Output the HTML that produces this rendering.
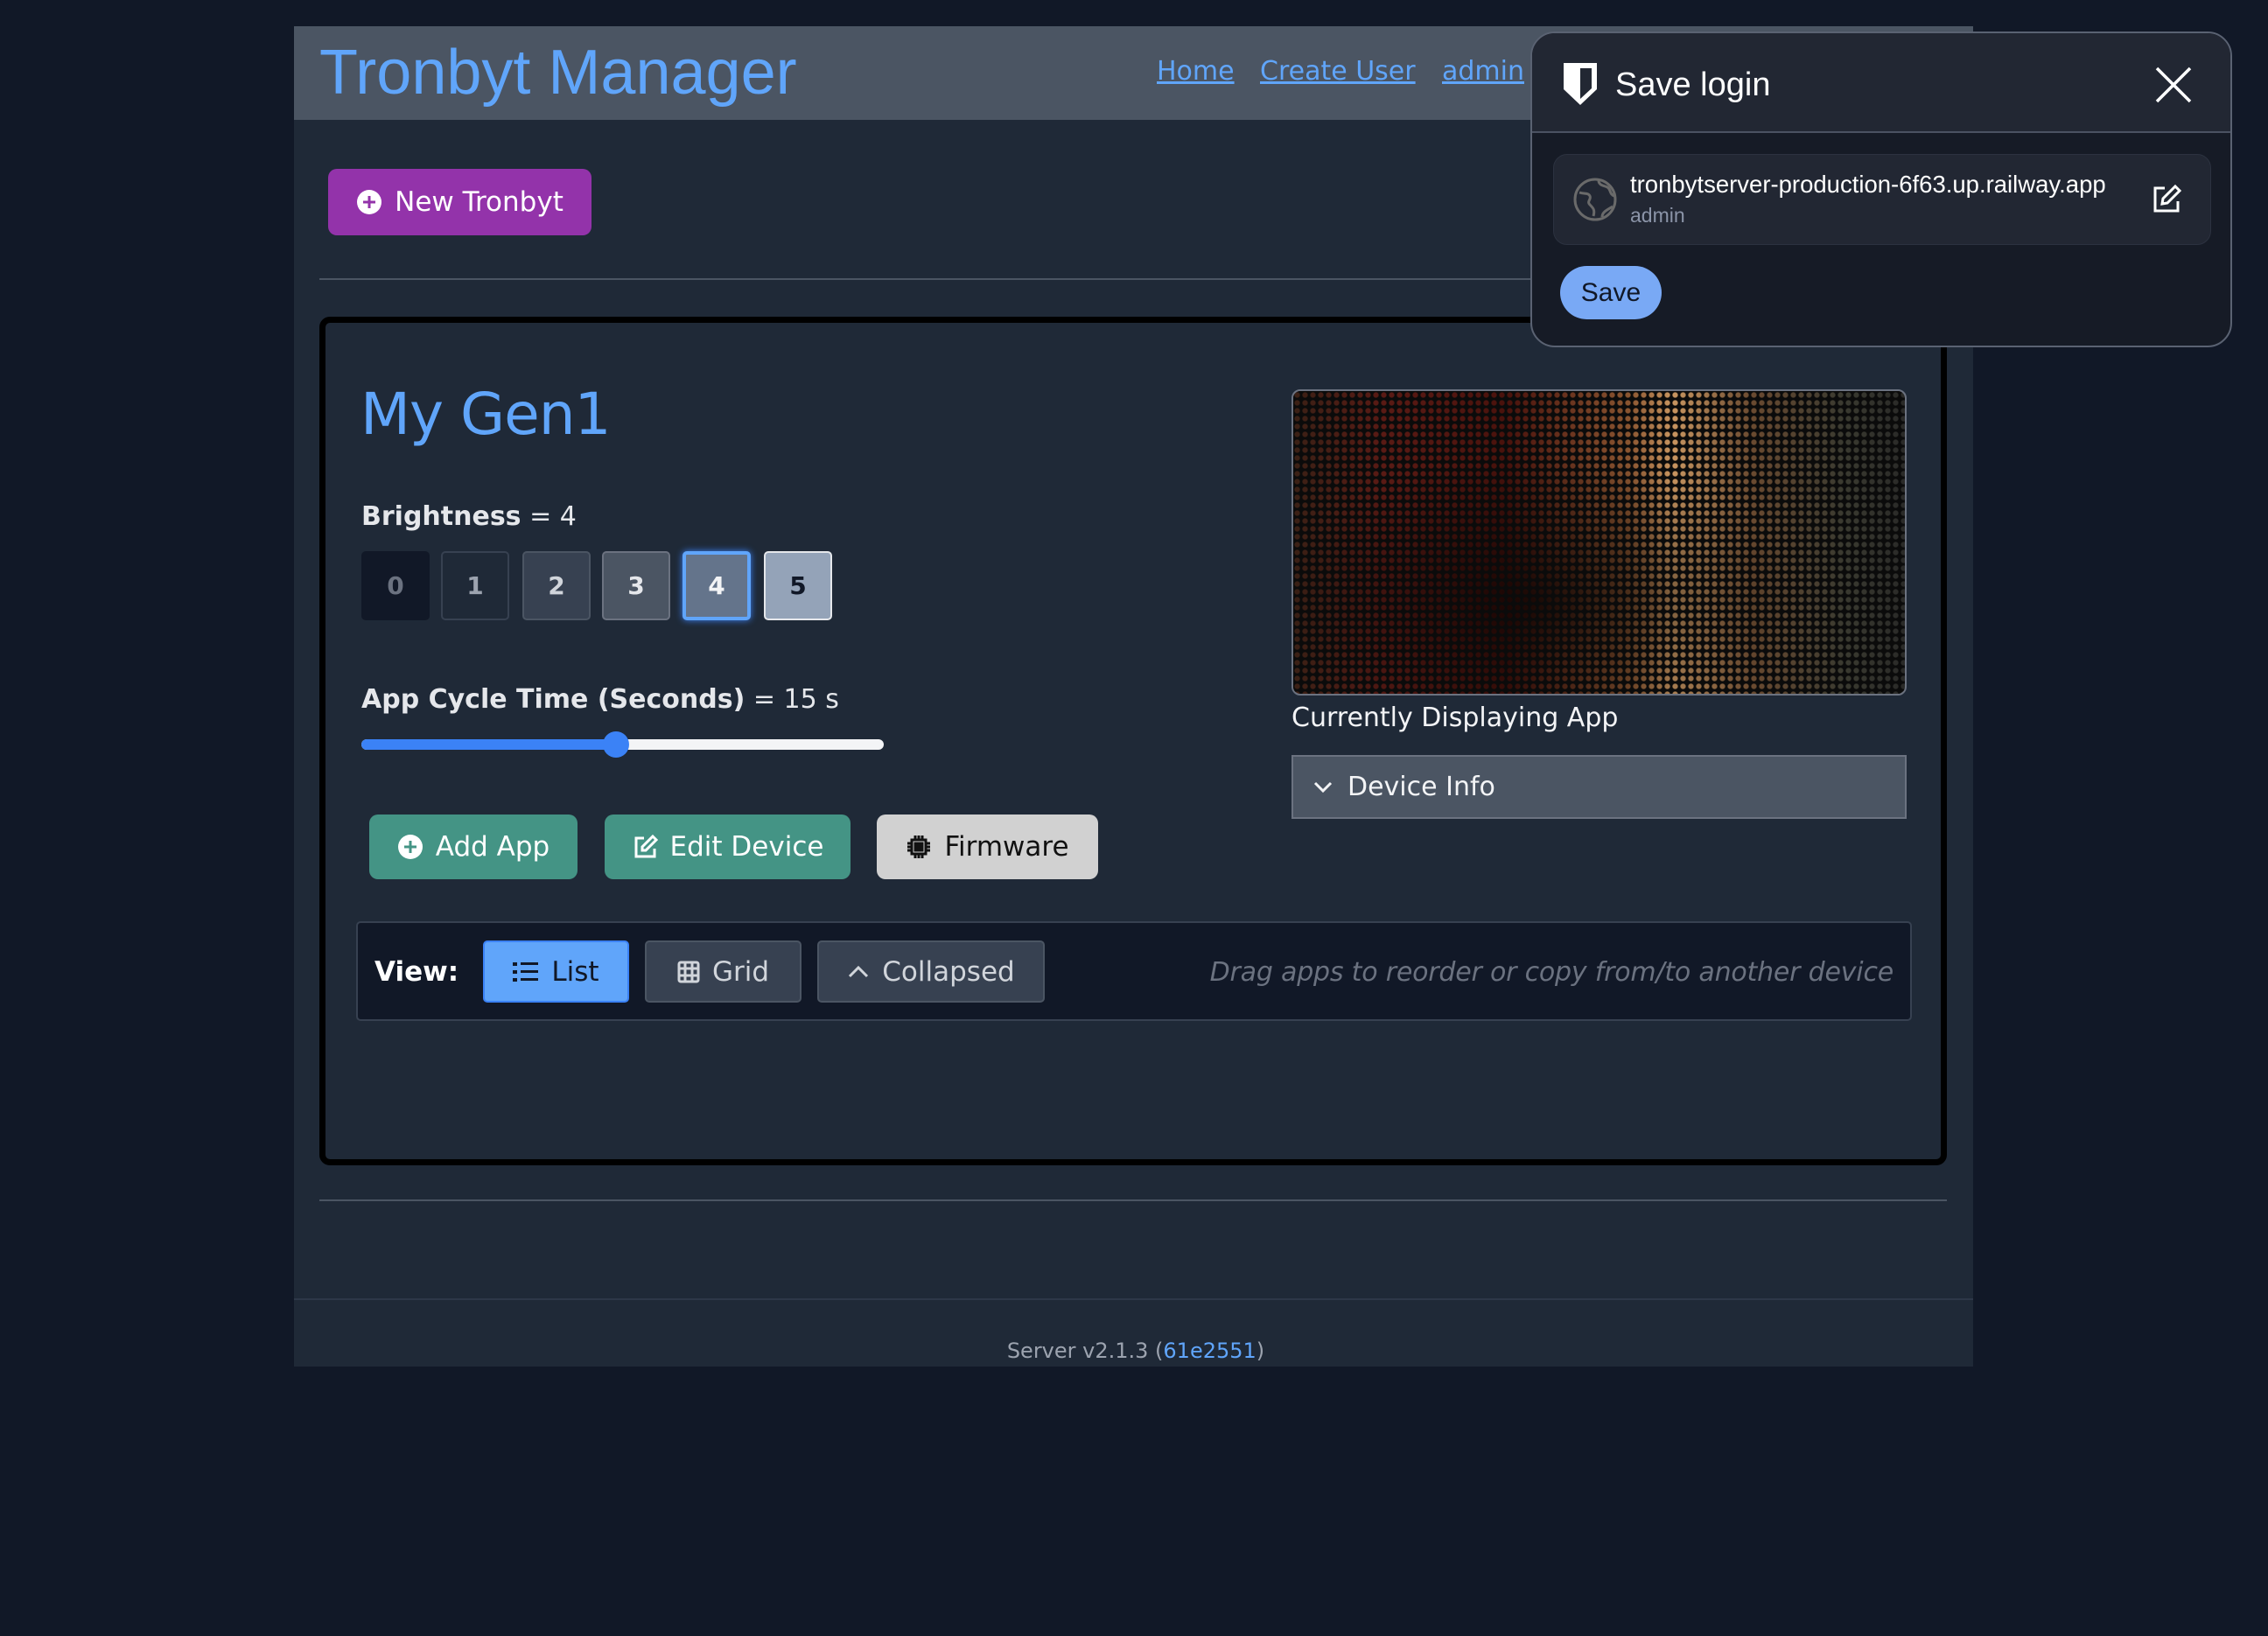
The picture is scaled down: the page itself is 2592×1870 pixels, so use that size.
<!DOCTYPE html>
<html><head><meta charset="utf-8"><style>
*{box-sizing:border-box;margin:0;padding:0}
body{width:2592px;height:1870px;background:#111827;font-family:"DejaVu Sans",sans-serif;position:relative;overflow:hidden;color:#e5e7eb}
.abs{position:absolute}
.wrap{left:336px;top:30px;width:1919px;height:1532px;background:#1f2937}
.hdr{left:336px;top:30px;width:1919px;height:107px;background:#4b5563}
.title{left:365px;top:38px;font-family:"Liberation Sans",sans-serif;font-size:72px;color:#60a5fa;line-height:90px}
.nav{top:62px;font-size:30px;color:#60a5fa;text-decoration:underline;line-height:40px}
.btn{position:absolute;display:flex;align-items:center;justify-content:center;border-radius:10px;font-size:31px}
.hr{height:2px;background:#374151}
.card{left:365px;top:362px;width:1860px;height:970px;border:7px solid #000;border-radius:12px;background:#1f2937}
.bb{position:absolute;top:630px;width:78px;height:79px;border-radius:5px;font-weight:bold;font-size:28px;display:flex;align-items:center;justify-content:center;border:2px solid transparent}
.vb{position:absolute;top:1075px;height:71px;border-radius:5px;display:flex;align-items:center;justify-content:center;font-size:31px;background:#374151;border:2px solid #4b5563;color:#d1d5db;gap:14px}
</style></head><body>
<div class="abs wrap"></div>
<div class="abs hdr"></div>
<div class="abs title">Tronbyt Manager</div>
<div class="abs nav" style="left:1322px">Home</div>
<div class="abs nav" style="left:1440px">Create User</div>
<div class="abs nav" style="left:1648px">admin</div>

<div class="btn" style="left:375px;top:193px;width:301px;height:76px;background:#9333aa;color:#fff;gap:14px">
<svg width="30" height="30" viewBox="0 0 30 30"><circle cx="15" cy="15" r="14" fill="#fff"/><path d="M15 8v14M8 15h14" stroke="#9333aa" stroke-width="3"/></svg>New Tronbyt</div>
<div class="abs hr" style="left:365px;top:318px;width:1860px;background:#4b5563"></div>

<div class="abs card"></div>
<div class="abs" style="left:412px;top:435px;font-size:66px;color:#60a5fa;font-family:'DejaVu Sans',sans-serif;letter-spacing:-1px">My Gen1</div>
<div class="abs" style="left:413px;top:573px;font-size:30px"><b>Brightness</b> = 4</div>
<div class="bb" style="left:413px;background:#111827;color:#6b7280">0</div>
<div class="bb" style="left:504px;background:#1f2937;border-color:#374151;color:#9ca3af">1</div>
<div class="bb" style="left:597px;background:#374151;border-color:#4b5563;color:#d1d5db">2</div>
<div class="bb" style="left:688px;background:#4b5563;border-color:#6b7280;color:#e5e7eb">3</div>
<div class="bb" style="left:780px;background:#64748b;border:4px solid #60a5fa;color:#f3f4f6;box-shadow:0 0 8px #3b82f6">4</div>
<div class="bb" style="left:873px;background:#94a3b8;border-color:#e5e7eb;color:#111827">5</div>

<div class="abs" style="left:413px;top:782px;font-size:30px"><b>App Cycle Time (Seconds)</b> = 15 s</div>
<div class="abs" style="left:413px;top:845px;width:597px;height:12px;border-radius:6px;background:#f3f4f6"></div>
<div class="abs" style="left:413px;top:845px;width:292px;height:12px;border-radius:6px;background:#3b82f6"></div>
<div class="abs" style="left:689px;top:836px;width:30px;height:30px;border-radius:50%;background:#3b82f6"></div>

<div class="btn" style="left:422px;top:931px;width:238px;height:74px;background:#449485;color:#fff;gap:14px"><svg width="30" height="30" viewBox="0 0 30 30"><circle cx="15" cy="15" r="14" fill="#fff"/><path d="M15 8v14M8 15h14" stroke="#449485" stroke-width="3"/></svg>Add App</div>
<div class="btn" style="left:691px;top:931px;width:281px;height:74px;background:#449485;color:#fff;gap:14px"><svg width="30" height="30" viewBox="0 0 30 30" fill="none" stroke="#fff" stroke-width="3"><path d="M14 5H5v21h21v-9"/><path d="M24 3l4 4-12 12h-4v-4z"/></svg>Edit Device</div>
<div class="btn" style="left:1002px;top:931px;width:253px;height:74px;background:#d1d1d1;color:#111;gap:14px"><svg width="30" height="30" viewBox="0 0 30 30" fill="none" stroke="#111" stroke-width="3"><rect x="7" y="7" width="16" height="16"/><rect x="11" y="11" width="8" height="8" fill="#111"/><path d="M11 2v5M15 2v5M19 2v5M11 23v5M15 23v5M19 23v5M2 11h5M2 15h5M2 19h5M23 11h5M23 15h5M23 19h5"/></svg>Firmware</div>

<div class="abs" style="left:407px;top:1053px;width:1778px;height:114px;background:#111827;border:2px solid #374151;border-radius:5px"></div>
<div class="abs" style="left:428px;top:1093px;font-size:31px;font-weight:bold;color:#fff">View:</div>
<div class="vb" style="left:552px;width:167px;background:#60a5fa;border-color:#3b82f6;color:#111827"><svg width="30" height="26" viewBox="0 0 30 26" fill="#111827"><rect x="0" y="2" width="5" height="4"/><rect x="0" y="11" width="5" height="4"/><rect x="0" y="20" width="5" height="4"/><rect x="9" y="2" width="20" height="3"/><rect x="9" y="11" width="20" height="3"/><rect x="9" y="20" width="20" height="3"/></svg>List</div>
<div class="vb" style="left:737px;width:179px"><svg width="26" height="26" viewBox="0 0 26 26" fill="none" stroke="#d1d5db" stroke-width="3"><rect x="2" y="2" width="22" height="22" rx="2"/><path d="M9 2v22M17 2v22M2 9h22M2 17h22"/></svg>Grid</div>
<div class="vb" style="left:934px;width:260px"><svg width="26" height="20" viewBox="0 0 26 20" fill="none" stroke="#d1d5db" stroke-width="3"><path d="M3 15l10-10 10 10"/></svg>Collapsed</div>
<div class="abs" style="right:428px;top:1094px;font-size:30px;font-style:italic;color:#6b7280;letter-spacing:-0.2px">Drag apps to reorder or copy from/to another device</div>

<div class="abs" style="left:1476px;top:445px;width:703px;height:350px;border:2px solid #6b7280;border-radius:10px;overflow:hidden;background:linear-gradient(90deg,#3a2015 0%,#5a1a14 15%,#4a120c 35%,#8a5530 55%,#c89560 62%,#6a4a30 75%,#3a3a30 90%,#2a2a28 100%)">
<div style="position:absolute;inset:0;background:radial-gradient(ellipse at 40% 70%,rgba(0,0,0,.7),transparent 50%)"></div>
<div style="position:absolute;inset:0;background:radial-gradient(circle,transparent 2.6px,#0b0b0b 3.6px);background-size:9px 9px"></div></div>
<div class="abs" style="left:1476px;top:803px;font-size:30px;color:#f3f4f6">Currently Displaying App</div>
<div class="abs" style="left:1476px;top:863px;width:703px;height:73px;background:#4b5563;border:2px solid #6b7280;display:flex;align-items:center;padding-left:22px;gap:16px;font-size:30px;color:#f3f4f6"><svg width="24" height="16" viewBox="0 0 24 16" fill="none" stroke="#f3f4f6" stroke-width="3"><path d="M3 3l9 9 9-9"/></svg>Device Info</div>

<div class="abs hr" style="left:365px;top:1371px;width:1860px;background:#4b5563"></div>
<div class="abs hr" style="left:336px;top:1484px;width:1919px;height:2px;background:#2d3748"></div>
<div class="abs" style="left:0;width:2592px;text-align:center;top:1530px;font-size:24px;color:#9ca3af"><span style="position:relative;left:2px">Server v2.1.3 (<span style="color:#60a5fa">61e2551</span>)</span></div>

<!-- popup -->
<div class="abs" style="left:1749px;top:36px;width:802px;height:361px;border:2px solid #5a6272;border-radius:28px;background:#161b26;overflow:hidden;font-family:'Liberation Sans',sans-serif">
<div style="height:114px;background:#222733;border-bottom:2px solid #4b5262;position:relative">
<svg style="position:absolute;left:34px;top:32px" width="42" height="52" viewBox="0 0 42 52"><path d="M2 2h38v30L21 50 2 32z" fill="#fff"/><path d="M21 8h13v23l-13 12z" fill="#222733"/></svg>
<div style="position:absolute;left:95px;top:38px;font-size:38px;color:#fff">Save login</div>
<svg style="position:absolute;left:711px;top:37px" width="44" height="44" viewBox="0 0 44 44" stroke="#fff" stroke-width="3.5"><path d="M3 3l38 38M41 3L3 41"/></svg>
</div>
<div style="position:absolute;left:24px;top:138px;width:752px;height:104px;background:#222733;border-radius:16px;border:1px solid #2c3240">
<svg style="position:absolute;left:21px;top:25px" width="52" height="52" viewBox="0 0 52 52" fill="none" stroke="#6a6a6a" stroke-width="3"><circle cx="26" cy="26" r="23"/><path d="M8 18c6 2 10 0 12 4s-4 6 0 10 6 6 4 13M30 4c0 6 6 6 10 8s2 8 8 10M34 46c0-6 6-8 12-12"/></svg>
<div style="position:absolute;left:87px;top:18px;font-size:27.5px;color:#fff">tronbytserver-production-6f63.up.railway.app</div>
<div style="position:absolute;left:87px;top:56px;font-size:23px;color:#8b94a8">admin</div>
<svg style="position:absolute;left:682px;top:33px" width="36" height="36" viewBox="0 0 36 36" fill="none" stroke="#fff" stroke-width="3"><path d="M16 5H5v26h26V20"/><path d="M28 3l5 5-14 14-6 1 1-6z"/></svg>
</div>
<div style="position:absolute;left:32px;top:266px;width:116px;height:61px;border-radius:31px;background:#79a9f5;color:#111827;font-size:30px;display:flex;align-items:center;justify-content:center">Save</div>
</div>
</body></html>
